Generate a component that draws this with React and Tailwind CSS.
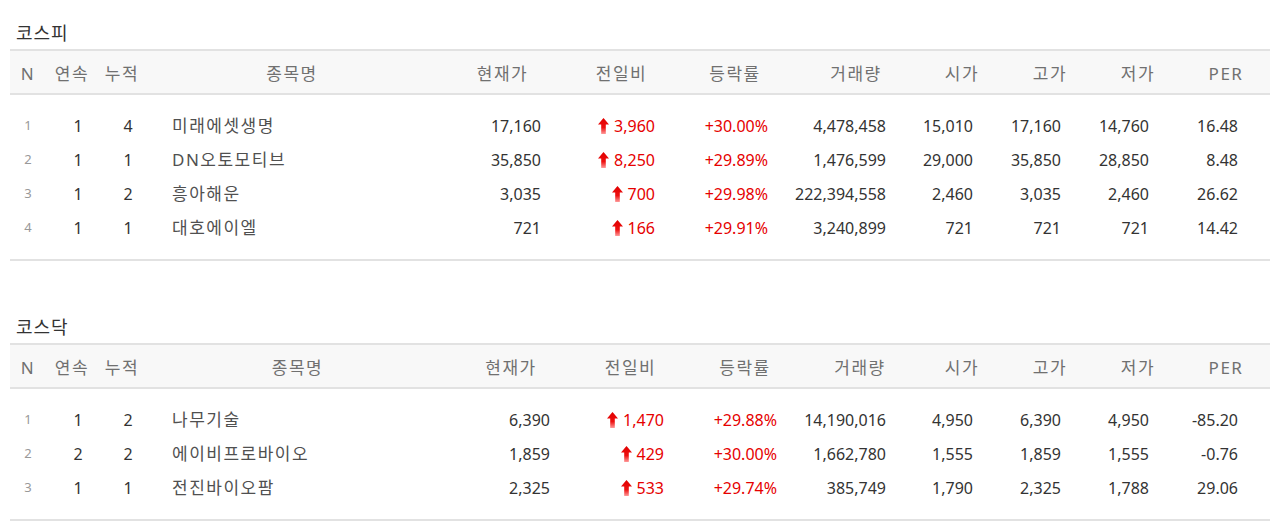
import React from "react";

const kospi = {
  title: "코스피",
  grid: "grid-cols-[36px_52px_48px_292px_129px_109px_118px_124px_88px_88px_88px_88px]",
  pads: ["pr-[26px]", "pr-[21px]", "pr-[26px]", "pr-[32px]", "pr-[33px]", "pr-[33px]", "pr-[33px]", "pr-[32px]"],
  rows: [
    ["1", "1", "4", "미래에셋생명", "17,160", "3,960", "+30.00%", "4,478,458", "15,010", "17,160", "14,760", "16.48"],
    ["2", "1", "1", "DN오토모티브", "35,850", "8,250", "+29.89%", "1,476,599", "29,000", "35,850", "28,850", "8.48"],
    ["3", "1", "2", "흥아해운", "3,035", "700", "+29.98%", "222,394,558", "2,460", "3,035", "2,460", "26.62"],
    ["4", "1", "1", "대호에이엘", "721", "166", "+29.91%", "3,240,899", "721", "721", "721", "14.42"],
  ],
};

const kosdaq = {
  title: "코스닥",
  grid: "grid-cols-[36px_52px_48px_303px_124px_115px_114px_116px_88px_88px_88px_88px]",
  pads: ["pr-[23px]", "pr-[24px]", "pr-[25px]", "pr-[32px]", "pr-[33px]", "pr-[33px]", "pr-[33px]", "pr-[32px]"],
  rows: [
    ["1", "1", "2", "나무기술", "6,390", "1,470", "+29.88%", "14,190,016", "4,950", "6,390", "4,950", "-85.20"],
    ["2", "2", "2", "에이비프로바이오", "1,859", "429", "+30.00%", "1,662,780", "1,555", "1,859", "1,555", "-0.76"],
    ["3", "1", "1", "전진바이오팜", "2,325", "533", "+29.74%", "385,749", "1,790", "2,325", "1,788", "29.06"],
  ],
};

const headers = ["N", "연속", "누적", "종목명", "현재가", "전일비", "등락률", "거래량", "시가", "고가", "저가", "PER"];

// red up arrow used in the 전일비 column
const UpArrow = () => (
  <svg width="11" height="16" viewBox="0 0 11 16" className="shrink-0">
    <defs>
      <linearGradient id="upg" x1="0" y1="0" x2="0" y2="1">
        <stop offset="0" stopColor="#e00000" />
        <stop offset="0.6" stopColor="#ee1010" />
        <stop offset="1" stopColor="#ff9a9a" />
      </linearGradient>
    </defs>
    <path d="M5.5 0 L11 6.5 L7.8 6.5 L7.8 16 L3.2 16 L3.2 6.5 L0 6.5 Z" fill="url(#upg)" />
  </svg>
);

const Section = ({ data, className }) => (
  <div className={className}>
    <h2 className="text-[18px] leading-6 tracking-[1px] text-[#333] pl-[6px]">{data.title}</h2>
    <div className="mt-1 w-[1260px]">
      <div className={`grid ${data.grid} h-[46px] pt-[4px] items-center bg-[#f8f8f8] border-y-2 border-[#e2e2e2] text-[17px] tracking-[1.5px] text-[#707070]`}>
        {headers.map((h) => (
          <div key={h} className="text-center">
            {h}
          </div>
        ))}
      </div>
      <div className="py-[14px] border-b-2 border-[#e2e2e2]">
        {data.rows.map((r) => (
          <div key={r[0]} className={`grid ${data.grid} h-[34px] items-center text-[16px] text-[#333]`}>
            <div className="text-center text-[13px] text-[#999]">{r[0]}</div>
            <div className="text-center pl-3">{r[1]}</div>
            <div className="text-center pl-3">{r[2]}</div>
            <div className="pl-[26px] text-[17px] tracking-[1.5px] text-[#505050]">{r[3]}</div>
            <div className={`text-right ${data.pads[0]}`}>{r[4]}</div>
            <div className={`flex justify-end items-center gap-[5px] text-[#e60000] ${data.pads[1]}`}>
              <UpArrow />
              <span>{r[5]}</span>
            </div>
            <div className={`text-right text-[#e60000] ${data.pads[2]}`}>{r[6]}</div>
            <div className={`text-right ${data.pads[3]}`}>{r[7]}</div>
            <div className={`text-right ${data.pads[4]}`}>{r[8]}</div>
            <div className={`text-right ${data.pads[5]}`}>{r[9]}</div>
            <div className={`text-right ${data.pads[6]}`}>{r[10]}</div>
            <div className={`text-right ${data.pads[7]}`}>{r[11]}</div>
          </div>
        ))}
      </div>
    </div>
  </div>
);

export default function App() {
  return (
    <div
      className="w-[1280px] h-[532px] bg-white pl-[10px] pt-[21px]"
      style={{ fontFamily: '"Noto Sans", "Noto Sans CJK KR", sans-serif' }}
    >
      <Section data={kospi} />
      <Section data={kosdaq} className="mt-[54px]" />
    </div>
  );
}
